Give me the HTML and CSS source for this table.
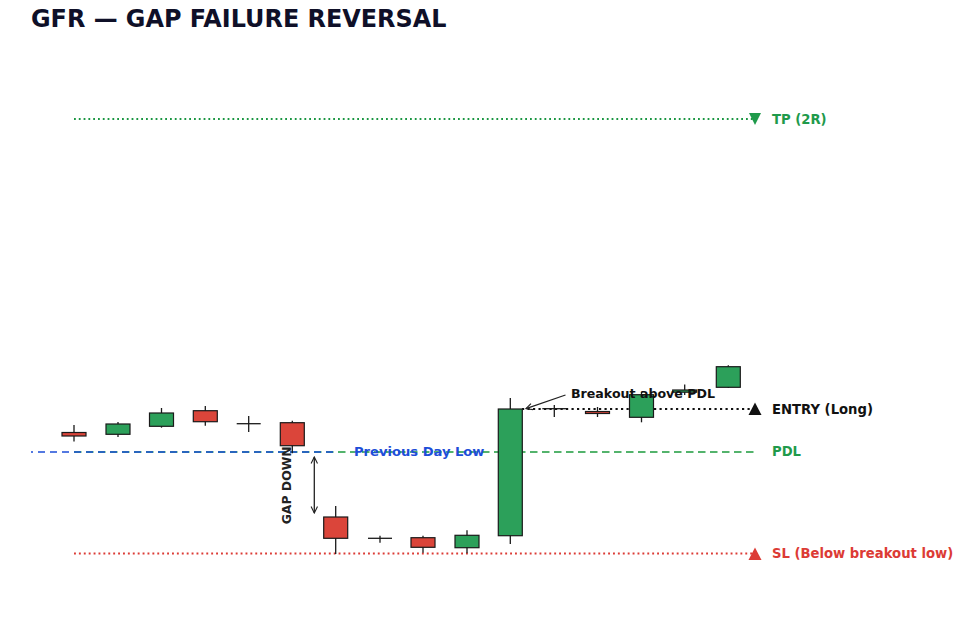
FILE: index.html
```html
<!DOCTYPE html>
<html lang="en">
<head>
<meta charset="utf-8">
<title>GFR — Gap Failure Reversal</title>
<link rel="stylesheet" href="styles.css">
</head>
<body>
<main class="page">
  <h1 class="title">GFR — GAP FAILURE REVERSAL</h1>
  <svg class="chart" viewBox="0 40 963 588" width="963" height="588" xmlns="http://www.w3.org/2000/svg">
    <defs>
      <marker id="head" viewBox="0 0 10 10" refX="9" refY="5" markerWidth="8" markerHeight="8" markerUnits="userSpaceOnUse" orient="auto-start-reverse">
        <path d="M1 1 L9 5 L1 9" fill="none" stroke="#222" stroke-width="1.4"/>
      </marker>
    </defs>

    <!-- level lines -->
    <line class="ln-tp" x1="74" y1="119" x2="755" y2="119"/>
    <line class="ln-pdl" x1="74" y1="452" x2="755" y2="452"/>
    <line class="ln-blue" x1="31" y1="452" x2="336" y2="452"/>
    <line class="ln-sl" x1="74" y1="553.5" x2="755" y2="553.5"/>
    <line class="ln-entry" x1="522" y1="409" x2="755" y2="409"/>

    <!-- candles -->
    <g class="candles">
      <line class="wick" x1="74" y1="425" x2="74" y2="441.5"/>
      <rect class="red" x="62" y="432.5" width="24" height="3.5"/>

      <line class="wick" x1="118" y1="422" x2="118" y2="437"/>
      <rect class="grn" x="106" y="424" width="24" height="10.3"/>

      <line class="wick" x1="161.5" y1="408" x2="161.5" y2="427.7"/>
      <rect class="grn" x="149.5" y="413" width="24" height="13.3"/>

      <line class="wick" x1="205.3" y1="406" x2="205.3" y2="425.7"/>
      <rect class="red" x="193.3" y="410.7" width="24" height="11"/>

      <line class="wick" x1="248.7" y1="416" x2="248.7" y2="432"/>
      <line class="doji" x1="236.7" y1="423.7" x2="260.7" y2="423.7"/>

      <line class="wick" x1="292.3" y1="420.7" x2="292.3" y2="453.3"/>
      <rect class="red" x="280.3" y="422.7" width="24" height="23"/>

      <line class="wick" x1="335.7" y1="506" x2="335.7" y2="554"/>
      <rect class="red" x="323.7" y="517" width="24" height="21.3"/>

      <line class="wick" x1="380" y1="535.7" x2="380" y2="542.7"/>
      <line class="doji" x1="368" y1="538.3" x2="392" y2="538.3"/>

      <line class="wick" x1="423" y1="535.7" x2="423" y2="552.7"/>
      <rect class="red" x="411" y="537.7" width="24" height="9.6"/>

      <line class="wick" x1="467" y1="530.3" x2="467" y2="553.3"/>
      <rect class="grn" x="455" y="535.3" width="24" height="12.4"/>

      <line class="wick" x1="510.3" y1="398" x2="510.3" y2="544"/>
      <rect class="grn" x="498.3" y="409" width="24" height="126.7"/>

      <line class="wick" x1="554.3" y1="405" x2="554.3" y2="417"/>
      <line class="doji" x1="542.3" y1="408.7" x2="566.3" y2="408.7"/>

      <line class="wick" x1="597.5" y1="407" x2="597.5" y2="417"/>
      <rect class="red" x="585.5" y="411.5" width="24" height="2"/>

      <line class="wick" x1="641.5" y1="392" x2="641.5" y2="422.3"/>
      <rect class="grn" x="629.5" y="394.7" width="24" height="22.6"/>

      <line class="wick" x1="684.7" y1="384.5" x2="684.7" y2="395"/>
      <rect class="grn" x="672.7" y="390" width="24" height="2.2"/>

      <line class="wick" x1="728.3" y1="365.3" x2="728.3" y2="388"/>
      <rect class="grn" x="716.3" y="366.7" width="24" height="20.6"/>
    </g>

    <!-- end markers -->
    <path class="mk-tp" d="M749 113 L761 113 L755 125 Z"/>
    <path class="mk-entry" d="M748.5 415 L761.5 415 L755 402.5 Z"/>
    <path class="mk-sl" d="M748.5 560 L761.5 560 L755 547.5 Z"/>

    <!-- annotations -->
    <line class="arrow" x1="314.3" y1="457" x2="314.3" y2="513" marker-start="url(#head)" marker-end="url(#head)"/>
    <text class="t-gap" transform="translate(290.5 485.3) rotate(-90)" text-anchor="middle">GAP DOWN</text>

    <line class="arrow" x1="565.5" y1="395" x2="526" y2="408.7" marker-end="url(#head)"/>
    <text class="t-break" x="571" y="398.3">Breakout above PDL</text>

    <text class="t-pdlname" x="354" y="456.3">Previous Day Low</text>

    <text class="t-tp" x="772" y="124">TP (2R)</text>
    <text class="t-entry" x="772" y="414">ENTRY (Long)</text>
    <text class="t-pdl" x="772" y="456.3">PDL</text>
    <text class="t-sl" x="772" y="558.3">SL (Below breakout low)</text>
  </svg>
</main>
</body>
</html>
```

FILE: styles.css
```css
html, body {
  margin: 0;
  padding: 0;
  background: #ffffff;
}

.page {
  width: 963px;
  height: 628px;
  overflow: hidden;
  display: flex;
  flex-direction: column;
}

.title {
  margin: 0;
  height: 40px;
  box-sizing: border-box;
  padding: 5px 0 0 31px;
  font-family: "DejaVu Sans", sans-serif;
  font-weight: bold;
  font-size: 23.9px;
  line-height: 28px;
  color: #0f1028;
  white-space: nowrap;
}

.chart {
  display: block;
  font-family: "DejaVu Sans", sans-serif;
  font-weight: bold;
}

.ln-tp {
  stroke: #1a9641;
  stroke-width: 1.8;
  stroke-dasharray: 1.8 3;
}

.ln-sl {
  stroke: #dc3b35;
  stroke-width: 1.9;
  stroke-dasharray: 1.9 3;
}

.ln-entry {
  stroke: #111111;
  stroke-width: 1.9;
  stroke-dasharray: 2.2 3.3;
}

.ln-pdl {
  stroke: #1b9a3c;
  stroke-width: 1.6;
  stroke-dasharray: 7.5 4.5;
}

.ln-blue {
  stroke: #1d4ed8;
  stroke-width: 1.6;
  stroke-dasharray: 7 5;
  stroke-dashoffset: 5;
}

.wick {
  stroke: #1a1a1a;
  stroke-width: 1.3;
}

.doji {
  stroke: #1a1a1a;
  stroke-width: 1.3;
}

.red {
  fill: #db453a;
  stroke: #1a1a1a;
  stroke-width: 1.2;
}

.grn {
  fill: #2ca05a;
  stroke: #1a1a1a;
  stroke-width: 1.2;
}

.mk-tp {
  fill: #1f9a4b;
}

.mk-entry {
  fill: #111111;
}

.mk-sl {
  fill: #dc3b35;
}

.arrow {
  stroke: #222222;
  stroke-width: 1.3;
  fill: none;
}

.t-gap {
  font-size: 12.4px;
  fill: #222222;
}

.t-break {
  font-size: 12.6px;
  fill: #111111;
}

.t-pdlname {
  font-size: 13.1px;
  fill: #1d4ed8;
}

.t-tp,
.t-pdl {
  font-size: 13.2px;
  fill: #1f9a4b;
}

.t-entry {
  font-size: 13.2px;
  fill: #111111;
}

.t-sl {
  font-size: 13.2px;
  fill: #dc3b35;
}
```
